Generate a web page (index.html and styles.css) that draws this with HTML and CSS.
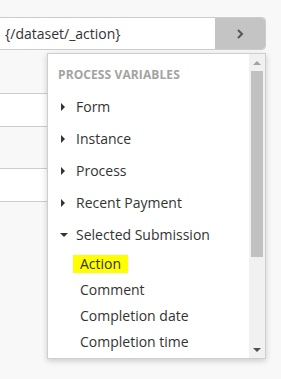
FILE: index.html
```html
<!DOCTYPE html>
<html>
<head>
<meta charset="utf-8">
<link rel="stylesheet" href="styles.css">
</head>
<body>
<div class="page">
  <div class="field">
    <div class="field-text">{/dataset/_action}</div>
    <div class="field-btn">
      <svg width="8" height="10" viewBox="0 0 8 10"><polyline points="2,1 6,5 2,9" fill="none" stroke="#555" stroke-width="2"/></svg>
    </div>
  </div>
  <div class="rows">
    <div class="row"></div>
    <div class="row row-2"></div>
  </div>

  <div class="menu">
    <div class="menu-body">
      <div class="menu-title">PROCESS VARIABLES</div>
      <ul class="tree">
        <li class="node"><span class="caret caret-right"></span>Form</li>
        <li class="node"><span class="caret caret-right"></span>Instance</li>
        <li class="node"><span class="caret caret-right"></span>Process</li>
        <li class="node"><span class="caret caret-right"></span>Recent Payment</li>
        <li class="node"><span class="caret caret-down"></span>Selected Submission</li>
      </ul>
      <ul class="leaves">
        <li class="leaf"><span class="leaf-label is-active">Action</span></li>
        <li class="leaf"><span class="leaf-label">Comment</span></li>
        <li class="leaf"><span class="leaf-label">Completion date</span></li>
        <li class="leaf"><span class="leaf-label">Completion time</span></li>
      </ul>
    </div>
    <div class="scrollbar">
      <div class="sb-btn"><span class="sb-up"></span></div>
      <div class="sb-track"><div class="sb-thumb"></div></div>
      <div class="sb-btn"><span class="sb-down"></span></div>
    </div>
  </div>
</div>
</body>
</html>
```
FILE: styles.css
```css
html, body {
  margin: 0;
  padding: 0;
  background: #f8f8f8;
  font-family: "Open Sans", "Noto Sans", sans-serif;
  color: #333;
}
.page {
  position: relative;
  width: 281px;
  height: 379px;
  overflow: hidden;
  padding-top: 17px;
  box-sizing: border-box;
}
.field {
  display: flex;
  height: 33px;
  box-sizing: border-box;
  width: 276px;
  margin-left: -10px;
  border: 1px solid #cccccc;
  border-radius: 0 4px 4px 0;
  background: #fff;
  overflow: hidden;
}
.field-text {
  flex: 1;
  font-size: 14px;
  line-height: 32px;
  padding-left: 14px;
  white-space: nowrap;
}
.field-btn {
  width: 50px;
  background: #c4c4c4;
  display: flex;
  align-items: center;
  justify-content: center;
}
.rows {
  margin-top: 43px;
  display: flex;
  flex-direction: column;
  gap: 41px;
}
.row {
  width: 60px;
  height: 34px;
  box-sizing: border-box;
  background: #fff;
  border-top: 1px solid #cccccc;
  border-bottom: 1px solid #cccccc;
}
.menu {
  position: absolute;
  left: 47px;
  top: 53px;
  width: 219px;
  height: 306px;
  box-sizing: border-box;
  background: #fff;
  border: 1px solid #cfcfcf;
  box-shadow: 0 2px 6px rgba(0, 0, 0, 0.18);
  display: flex;
}
.menu-body {
  flex: 1;
  padding: 13px 0 0 10px;
  overflow: hidden;
}
.menu-title {
  font-size: 12px;
  font-weight: 700;
  color: #a3a3a3;
  line-height: 16px;
  letter-spacing: 0.1px;
}
.tree, .leaves {
  list-style: none;
  margin: 0;
  padding: 0;
}
.tree {
  margin-top: 8px;
}
.node {
  display: flex;
  align-items: center;
  font-size: 14px;
  line-height: 32px;
  white-space: nowrap;
}
.caret {
  width: 18px;
  height: 8px;
  position: relative;
  flex: none;
}
.caret-right::before {
  content: "";
  position: absolute;
  left: 3px;
  top: 0;
  border-left: 4px solid #333;
  border-top: 4px solid transparent;
  border-bottom: 4px solid transparent;
}
.caret-down::before {
  content: "";
  position: absolute;
  left: 2px;
  top: 2px;
  border-top: 4px solid #333;
  border-left: 4px solid transparent;
  border-right: 4px solid transparent;
}
.leaf {
  line-height: 26px;
  height: 26px;
  font-size: 14px;
  padding-left: 15px;
  white-space: nowrap;
}
.leaf-label {
  padding: 0 7px;
  display: inline-block;
  line-height: 18px;
}
.leaf-label.is-active {
  background: #ffff00;
}
.scrollbar {
  width: 16px;
  background: #f1f1f1;
  display: flex;
  flex-direction: column;
}
.sb-btn {
  height: 17px;
  display: flex;
  align-items: center;
  justify-content: center;
}
.sb-up {
  border-bottom: 4px solid #a3a3a3;
  border-left: 4px solid transparent;
  border-right: 4px solid transparent;
}
.sb-down {
  border-top: 4px solid #505050;
  border-left: 4px solid transparent;
  border-right: 4px solid transparent;
}
.sb-track {
  flex: 1;
  padding: 0 2px;
}
.sb-thumb {
  height: 186px;
  background: #c1c1c1;
}
```
